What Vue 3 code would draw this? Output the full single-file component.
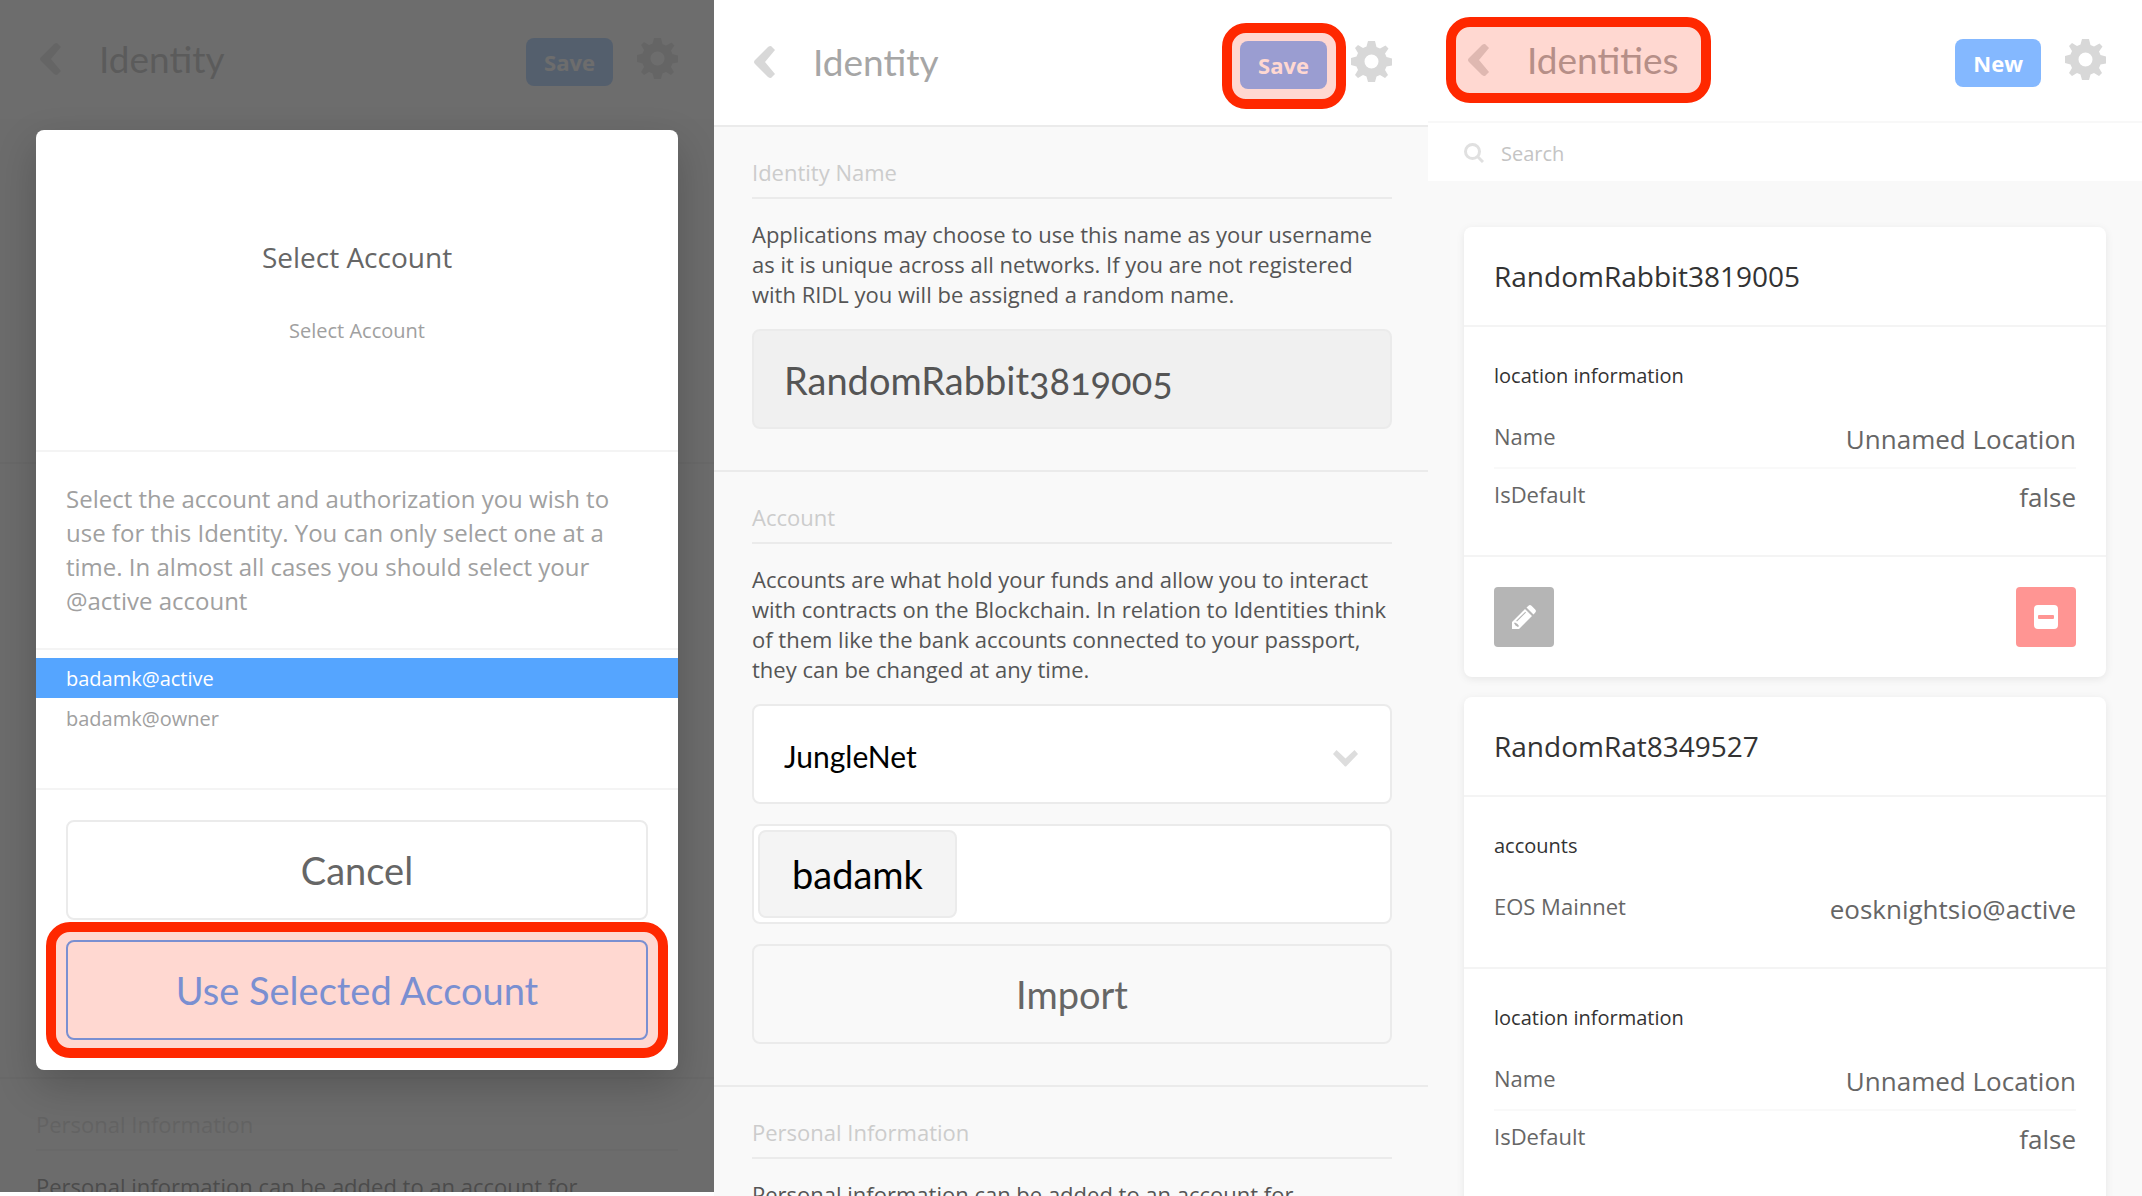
<script setup>
import { ref } from 'vue'

const accounts = ['badamk@active', 'badamk@owner']
const selected = ref('badamk@active')
const identityName = ref('RandomRabbit3819005')
const network = ref('JungleNet')
const query = ref('')

const location = {
  label: 'location information',
  rows: [['Name', 'Unnamed Location'], ['IsDefault', 'false']],
}
const identities = [
  { name: 'RandomRabbit3819005', groups: [location] },
  {
    name: 'RandomRat8349527',
    groups: [{ label: 'accounts', rows: [['EOS Mainnet', 'eosknightsio@active']] }, location],
  },
]

const chevron = 'M17 0 L21 4 L11 16 L21 28 L17 32 Q15 32 14 31 L1 18 Q-1 16 1 14 L14 1 Q15 0 17 0 Z'
const gear =
  'M17 0h7l1.5 6 3.5 1.5L34.500 4.500 37.500 7.500 34 12.500 35.500 16 41 17.500V24.500L35.500 25.500 34 29 37 34 34 37 29 34 25.500 35.500 24 41H17L15.500 35.500 12 34 7 37 4 34 7 29 5.500 25.500 0 24V17L5.500 15.500 7 12 4 7 7 4 12 7 15.500 5.500ZM20.500 13.500a7 7 0 1 0 0 14 7 7 0 1 0 0-14Z'
</script>

<template>
  <main class="board">
    <section class="screen dimmed">
      <div class="page">
        <header class="bar">
          <button class="icon" aria-label="Back"><svg width="21" height="32" viewBox="0 0 21 32"><path :d="chevron" /></svg></button>
          <h1>Identity</h1>
          <button class="action">Save</button>
          <button class="icon" aria-label="Settings"><svg width="41" height="41" viewBox="0 0 41 41"><path :d="gear" fill-rule="evenodd" /></svg></button>
        </header>
        <div class="block name-space"></div>
        <div class="block account-space"></div>
        <div class="block">
          <h2>Personal Information</h2>
          <p>Personal information can be added to an account for</p>
        </div>
      </div>
      <div class="shade">
        <div class="modal" role="dialog" aria-labelledby="modal-title">
          <div class="modal-head">
            <h2 id="modal-title">Select Account</h2>
            <p>Select Account</p>
          </div>
          <p class="modal-text">
            Select the account and authorization you wish to use for this Identity. You can only select one at a
            time. In almost all cases you should select your @active account
          </p>
          <div class="options">
            <button
              v-for="account in accounts"
              :key="account"
              class="option"
              :class="{ on: account === selected }"
              @click="selected = account"
            >{{ account }}</button>
          </div>
          <div class="modal-foot">
            <button class="wide">Cancel</button>
            <div class="marked mark-wide"><button class="wide primary">Use Selected Account</button></div>
          </div>
        </div>
      </div>
    </section>

    <section class="screen">
      <header class="bar tall">
        <button class="icon" aria-label="Back"><svg width="21" height="32" viewBox="0 0 21 32"><path :d="chevron" /></svg></button>
        <h1>Identity</h1>
        <div class="marked mark-save"><button class="action">Save</button></div>
        <button class="icon" aria-label="Settings"><svg width="41" height="41" viewBox="0 0 41 41"><path :d="gear" fill-rule="evenodd" /></svg></button>
      </header>
      <div class="block">
        <h2><label for="identity-name">Identity Name</label></h2>
        <p>
          Applications may choose to use this name as your username as it is unique across all networks. If you
          are not registered with RIDL you will be assigned a random name.
        </p>
        <input id="identity-name" v-model="identityName" class="field filled" type="text" />
      </div>
      <div class="block">
        <h2>Account</h2>
        <p>
          Accounts are what hold your funds and allow you to interact with contracts on the Blockchain. In
          relation to Identities think of them like the bank accounts connected to your passport, they can be
          changed at any time.
        </p>
        <div class="picker">
          <select v-model="network" class="field" aria-label="Network">
            <option>JungleNet</option>
          </select>
          <svg width="25" height="17" viewBox="0 0 25 17"><path d="M3.500 0 12.500 8.500 21.500 0 25 4 13.500 16Q12.500 17 11.500 16L0 4Z" /></svg>
        </div>
        <div class="field tags"><button class="tag">badamk</button></div>
        <button class="wide">Import</button>
      </div>
      <div class="block">
        <h2>Personal Information</h2>
        <p>Personal information can be added to an account for</p>
      </div>
    </section>

    <section class="screen">
      <header class="bar">
        <div class="marked mark-title">
          <button class="icon" aria-label="Back"><svg width="21" height="32" viewBox="0 0 21 32"><path :d="chevron" /></svg></button>
          <h1>Identities</h1>
        </div>
        <button class="action">New</button>
        <button class="icon" aria-label="Settings"><svg width="41" height="41" viewBox="0 0 41 41"><path :d="gear" fill-rule="evenodd" /></svg></button>
      </header>
      <div class="search">
        <svg width="20" height="20" viewBox="0 0 20 20"><circle cx="8.500" cy="8.500" r="7" /><path d="M13.500 13.500 19 19" /></svg>
        <input v-model="query" type="text" placeholder="Search" aria-label="Search" />
      </div>
      <div class="cards">
        <article v-for="identity in identities" :key="identity.name" class="card">
          <h2>{{ identity.name }}</h2>
          <div v-for="group in identity.groups" :key="group.label" class="group">
            <h3>{{ group.label }}</h3>
            <dl>
              <div v-for="[key, value] in group.rows" :key="key" class="row">
                <dt>{{ key }}</dt>
                <dd>{{ value }}</dd>
              </div>
            </dl>
          </div>
          <footer>
            <button class="square" aria-label="Edit">
              <svg width="24" height="24" viewBox="0 0 24 24"><path fill-rule="evenodd" d="M0 24V17L13 4 20 11 7 24ZM2 18 3.500 20.500 6 22 7 21 5.500 19 3 17.500ZM5 16.500 14 7.500 13.300 6.800 4.200 15.800ZM14.500 2.500 16.500.7Q18 -.6 19.500.8L23.200 4.500Q24.600 6 23.300 7.500L21.500 9.500Z" /></svg>
            </button>
            <button class="square danger" aria-label="Remove">
              <svg width="24" height="24" viewBox="0 0 24 24"><path fill-rule="evenodd" d="M4 0H20Q24 0 24 4V20Q24 24 20 24H4Q0 24 0 20V4Q0 0 4 0ZM5 10Q4 10 4 11V13Q4 14 5 14H19Q20 14 20 13V11Q20 10 19 10Z" /></svg>
            </button>
          </footer>
        </article>
      </div>
    </section>
  </main>
</template>

<style>
body {
  margin: 0;
  background: #fff;
}
</style>

<style scoped>
* {
  box-sizing: border-box;
}
h1, h2, h3, p, dl, dd {
  margin: 0;
  font-weight: 400;
}
button, input, select {
  margin: 0;
  padding: 0;
  border: 0;
  background: none;
  font: inherit;
  color: inherit;
}
svg {
  display: block;
  fill: currentColor;
}
.board {
  display: grid;
  grid-template-columns: repeat(3, minmax(0, 1fr));
  height: 100vh;
  overflow: hidden;
  font-family: "Open Sans", sans-serif;
  color: #666;
}
.screen {
  min-height: 0;
  overflow: hidden;
  background: #f9f9f9;
}
.dimmed {
  position: relative;
  margin-bottom: 4px;
}

.bar {
  display: flex;
  align-items: center;
  height: 123px;
  padding: 0 36px 2px 40px;
  background: #fff;
  border-bottom: 2px solid #f8f8f8;
}
.bar.tall {
  height: 127px;
  border-bottom-color: #ebebeb;
}
.icon {
  color: #d8d8d8;
}
h1 {
  margin-left: 38px;
  margin-right: auto;
  font: 400 37px/48px Lato, sans-serif;
  color: #a6a6a6;
}
.action {
  height: 48px;
  margin: 6px 24px 0 0;
  padding: 0 18px;
  border-radius: 8px;
  background: #84b8ff;
  color: #fff;
  font-size: 22px;
  font-weight: 700;
}

.marked {
  position: relative;
}
.marked::after {
  content: "";
  position: absolute;
  border: 10px solid #ff2800;
  border-radius: 24px;
  background: rgba(255, 38, 0, 0.18);
  background-clip: padding-box;
  pointer-events: none;
}
.mark-wide::after {
  inset: -18px -20px;
}
.mark-save::after {
  inset: -12px 5px -20px -18px;
}
.mark-title {
  display: flex;
  align-items: center;
  margin-right: auto;
}
.mark-title::after {
  inset: -19px -32px -19px -22px;
}

.block {
  padding: 30px 36px 41px 38px;
  border-bottom: 2px solid #ebebeb;
}
.block h2 {
  padding-bottom: 10px;
  border-bottom: 2px solid #ebebeb;
  font-size: 22px;
  line-height: 30px;
  color: #ccc;
}
.block p {
  margin: 20px 0;
  font-size: 22px;
  line-height: 30px;
  color: #555;
}
.field,
.wide {
  display: block;
  width: 100%;
  height: 100px;
  border: 2px solid #ebebeb;
  border-radius: 8px;
  font-family: Lato, sans-serif;
}
.field {
  padding: 0 30px;
  background: #fff;
  color: #000;
}
.filled {
  padding-top: 2px;
  background: #f0f0f0;
  font-size: 38px;
  font-variant-numeric: oldstyle-nums;
  color: #555;
}
.wide {
  font-size: 38px;
  color: #666;
}
.primary {
  border-color: #5da7ff;
  color: #5da7ff;
}
.picker {
  display: grid;
  align-items: center;
}
.picker > * {
  grid-area: 1 / 1;
}
.picker svg {
  justify-self: end;
  margin: 8px 34px 0 0;
  color: #ddd;
  pointer-events: none;
}
select.field {
  appearance: none;
  padding-top: 4px;
  font-size: 30px;
}
.tags {
  margin: 20px 0;
  padding: 4px;
}
.tag {
  height: 88px;
  padding: 0 32px;
  border: 2px solid #ebebeb;
  border-radius: 8px;
  background: #f4f4f4;
  font-size: 38px;
}

.dimmed .bar {
  height: 121px;
}
.dimmed .block {
  padding-left: 36px;
}
.name-space {
  height: 343px;
}
.account-space {
  height: 615px;
}
.shade {
  position: absolute;
  inset: 0;
  padding: 130px 36px 0;
  background: rgba(72, 72, 72, 0.8);
}
.modal {
  overflow: hidden;
  border-radius: 8px;
  background: #fff;
  box-shadow: 0 16px 40px rgba(0, 0, 0, 0.2);
}
.modal-head {
  display: flex;
  flex-direction: column;
  justify-content: center;
  gap: 41px;
  height: 322px;
  padding-top: 2px;
  border-bottom: 2px solid #f4f4f4;
  text-align: center;
}
.modal-head h2 {
  font-size: 28px;
  line-height: 38px;
}
.modal-head p {
  font-size: 20px;
  line-height: 28px;
  color: #a0a0a0;
}
.modal-text {
  padding: 30px;
  border-bottom: 2px solid #f4f4f4;
  font-size: 24px;
  line-height: 34px;
  color: #a0a0a0;
}
.options {
  height: 140px;
  padding-top: 8px;
  border-bottom: 2px solid #f4f4f4;
}
.option {
  display: block;
  width: 100%;
  height: 40px;
  padding: 0 30px;
  text-align: left;
  font-size: 20px;
  color: #a0a0a0;
}
.option.on {
  background: #55a5ff;
  color: #fff;
}
.modal-foot {
  display: grid;
  gap: 20px;
  padding: 30px;
}

.search {
  display: flex;
  align-items: center;
  gap: 17px;
  height: 58px;
  padding: 2px 36px 0;
  background: #fff;
}
.search svg {
  fill: none;
  stroke: #e0e0e0;
  stroke-width: 3;
}
.search input {
  flex: 1;
  font-size: 20px;
}
.search input::placeholder {
  color: #c4c4c4;
}
.cards {
  display: grid;
  gap: 20px;
  padding: 46px 36px;
}
.card {
  border-radius: 8px;
  background: #fff;
  box-shadow: 0 2px 8px rgba(0, 0, 0, 0.08);
}
.card h2 {
  padding: 30px;
  border-bottom: 2px solid #f4f4f4;
  font-size: 28px;
  line-height: 38px;
  color: #333;
}
.group {
  padding: 30px;
  border-bottom: 2px solid #f4f4f4;
}
.group h3 {
  margin-bottom: 16px;
  font-size: 20px;
  line-height: 38px;
  color: #333;
}
.row {
  display: flex;
  justify-content: space-between;
  height: 56px;
}
.row + .row {
  height: 58px;
  border-top: 2px solid #f9f9f9;
}
dt {
  font-size: 22px;
  line-height: 50px;
}
dd {
  font-size: 26px;
  line-height: 56px;
}
.card footer {
  display: flex;
  justify-content: space-between;
  padding: 30px;
}
.square {
  display: grid;
  place-items: center;
  width: 60px;
  height: 60px;
  border-radius: 4px;
  background: #b5b5b5;
  color: #fff;
}
.danger {
  background: #ff9593;
}
</style>
